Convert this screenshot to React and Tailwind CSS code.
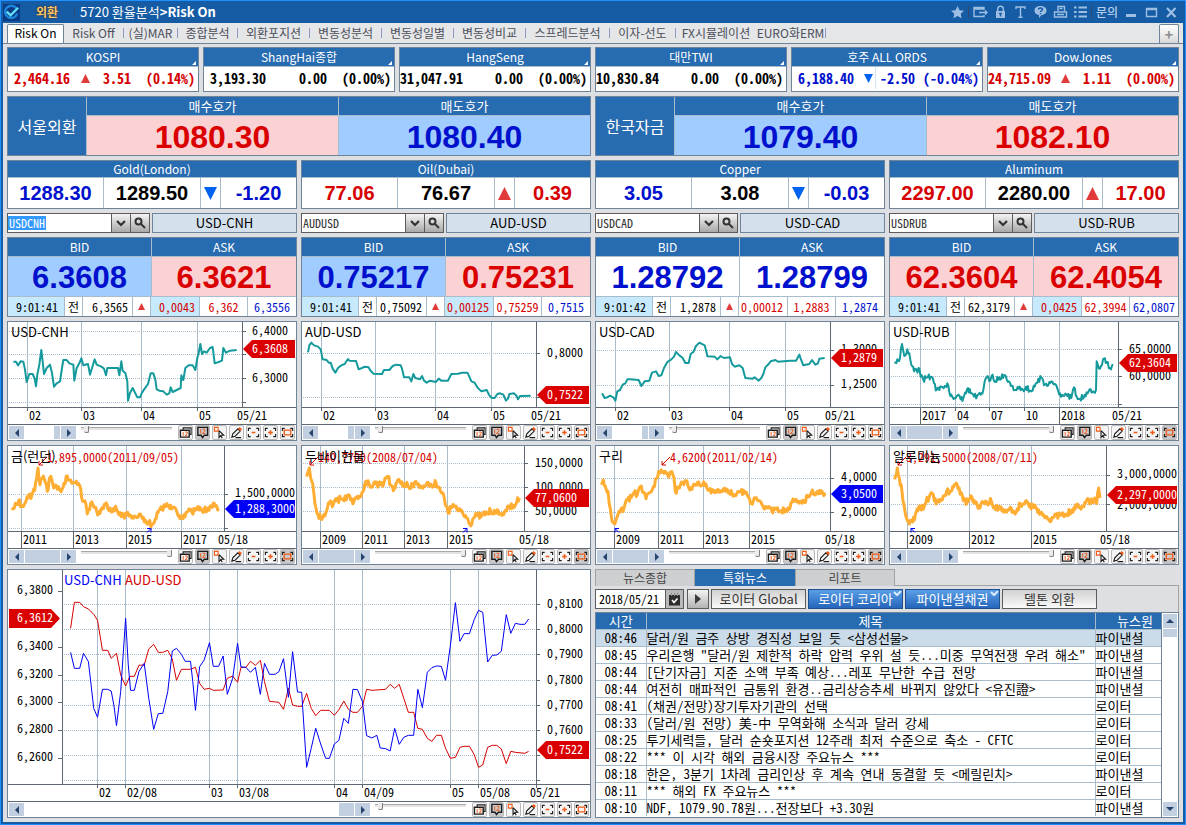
import React from 'react';
import clsx from 'clsx';

const indices = [
  { name: 'KOSPI', value: '2,464.16', dir: 'up', change: '3.51', pct: '(0.14%)' },
  { name: 'ShangHai종합', value: '3,193.30', dir: '', change: '0.00', pct: '(0.00%)' },
  { name: 'HangSeng', value: '31,047.91', dir: '', change: '0.00', pct: '(0.00%)' },
  { name: '대만TWI', value: '10,830.84', dir: '', change: '0.00', pct: '(0.00%)' },
  { name: '호주 ALL ORDS', value: '6,188.40', dir: 'down', change: '-2.50', pct: '(-0.04%)' },
  { name: 'DowJones', value: '24,715.09', dir: 'up', change: '1.11', pct: '(0.00%)' },
];

const spots = [
  { name: '서울외환', quotes: [['매수호가', '1080.30', 'up'], ['매도호가', '1080.40', 'down']] },
  { name: '한국자금', quotes: [['매수호가', '1079.40', 'down'], ['매도호가', '1082.10', 'up']] },
];

const commodities = [
  { name: 'Gold(London)', now: '1288.30', prev: '1289.50', dir: 'down', change: '-1.20', tone: 'down' },
  { name: 'Oil(Dubai)', now: '77.06', prev: '76.67', dir: 'up', change: '0.39', tone: 'up' },
  { name: 'Copper', now: '3.05', prev: '3.08', dir: 'down', change: '-0.03', tone: 'down' },
  { name: 'Aluminum', now: '2297.00', prev: '2280.00', dir: 'up', change: '17.00', tone: 'up' },
];

const pairs = [
  { code: 'USDCNH', name: 'USD-CNH', bid: '6.3608', ask: '6.3621', bidTone: 'down', askTone: 'up', time: '9:01:41', last: '6,3565', change: '0,0043', high: '6,362', low: '6,3556', flash: true, selected: true },
  { code: 'AUDUSD', name: 'AUD-USD', bid: '0.75217', ask: '0.75231', bidTone: 'down', askTone: 'up', time: '9:01:41', last: '0,75092', change: '0,00125', high: '0,75259', low: '0,7515', flash: true },
  { code: 'USDCAD', name: 'USD-CAD', bid: '1.28792', ask: '1.28799', bidTone: 'flat', askTone: 'flat', time: '9:01:42', last: '1,2878', change: '0,00012', high: '1,2883', low: '1,2874', flash: false },
  { code: 'USDRUB', name: 'USD-RUB', bid: '62.3604', ask: '62.4054', bidTone: 'up', askTone: 'up', time: '9:01:41', last: '62,3179', change: '0,0425', high: '62,3994', low: '62,0807', flash: true },
];

const tabs = [
  ['Risk Off', 'w-[60px]'],
  ['(실)MAR', 'w-[54px]'],
  ['종합분석', 'w-[60px]'],
  ['외환포지션', 'w-[72px]'],
  ['변동성분석', 'w-[72px]'],
  ['변동성일별', 'w-[72px]'],
  ['변동성비교', 'w-[72px]'],
  ['스프레드분석', 'w-[84px]'],
  ['이자-선도', 'w-[66px]'],
  ['FX시뮬레이션', 'w-[80px]'],
  ['EURO화ERM', 'w-[70px]'],
];

const news = [
  ['08:46', '달러/원 금주 상방 경직성 보일 듯 <삼성선물>', '파이낸셜'],
  ['08:45', '우리은행 "달러/원 제한적 하락 압력 우위 설 듯...미중 무역전쟁 우려 해소"', '파이낸셜'],
  ['08:44', '[단기자금] 지준 소액 부족 예상...레포 무난한 수급 전망', '파이낸셜'],
  ['08:44', '여전히 매파적인 금통위 환경..금리상승추세 바뀌지 않았다 <유진證>', '파이낸셜'],
  ['08:41', '(채권/전망)장기투자기관의 선택', '로이터'],
  ['08:33', '(달러/원 전망) 美-中 무역화해 소식과 달러 강세', '로이터'],
  ['08:25', '투기세력들, 달러 순숏포지션 12주래 최저 수준으로 축소 - CFTC', '로이터'],
  ['08:22', '*** 이 시각 해외 금융시장 주요뉴스 ***', '로이터'],
  ['08:18', '한은, 3분기 1차례 금리인상 후 계속 연내 동결할 듯 <메릴린치>', '파이낸셜'],
  ['08:11', '*** 해외 FX 주요뉴스 ***', '로이터'],
  ['08:10', 'NDF, 1079.90.78원...전장보다 +3.30원', '파이낸셜'],
];

// Series points are sampled three times finer than the plot; origin is the plot's top left corner.
const charts = [
  {
    title: 'USD-CNH', origin: [24, 12], color: '#149a9c', width: 2, rough: 0, full: false,
    axis: 234, grid: [[19, '02'], [73, '03'], [133, '04'], [189, '05']], end: [229, '05/21'],
    rows: [9, 32, 56, 80], labels: [[9, '6,4000'], [56, '6,3000']], tag: [27, '6,3608', '#db0000'], labelX: 244,
    points: '40,131 48,131 54,142 62,130 70,131 75,155 80,192 88,168 98,168 104,182 108,205 112,170 118,140 124,96 128,130 132,168 140,150 150,140 156,165 162,206 170,196 180,190 186,150 190,126 200,126 208,136 220,140 223,188 230,150 238,136 244,121 250,142 264,138 270,170 276,150 284,124 290,140 304,146 312,152 318,172 322,150 340,150 354,150 358,172 364,130 368,158 376,165 382,190 384,248 390,225 398,210 404,222 412,238 420,238 426,224 434,212 444,198 452,166 460,166 466,185 470,214 478,218 490,220 500,230 508,226 512,208 518,222 530,216 542,210 544,172 550,186 556,150 566,142 578,142 586,156 592,120 596,105 601,78 606,108 612,100 620,104 630,90 638,87 644,136 656,132 666,128 670,90 678,104 690,98 710,96',
  },
  {
    title: 'AUD-USD', origin: [18, 12], color: '#149a9c', width: 2, rough: 0, full: false,
    axis: 234, grid: [[19, '02'], [73, '03'], [133, '04'], [189, '05']], end: [229, '05/21'],
    rows: [31, 75], labels: [[31, '0,8000']], tag: [73, '0,7522', '#db0000'], labelX: 245,
    points: '36,103 40,82 46,74 54,82 66,86 74,94 80,124 92,126 98,134 104,134 110,152 118,164 126,150 136,142 146,138 156,123 160,128 180,129 188,154 198,150 206,146 218,148 222,156 232,167 258,168 264,156 280,156 290,144 300,140 314,142 318,152 324,178 340,178 346,190 352,168 358,180 372,184 378,174 384,188 392,194 402,188 420,192 428,182 436,188 456,188 466,168 486,167 498,164 514,164 520,176 526,190 536,194 544,208 556,220 572,216 580,232 588,240 596,240 604,228 612,226 622,230 630,248 636,242 640,228 654,226 662,234 666,244 672,234 704,233',
  },
  {
    title: 'USD-CAD', origin: [18, 12], color: '#149a9c', width: 2, rough: 0, full: false,
    axis: 234, grid: [[19, '02'], [73, '03'], [133, '04'], [189, '05']], end: [229, '05/21'],
    rows: [28, 63], labels: [[27, '1,3000'], [62, '1,2500']], tag: [36, '1,2879', '#db0000'], labelX: 245,
    points: '36,226 44,240 52,238 60,233 70,238 76,248 82,220 90,216 98,200 106,196 112,184 120,184 146,186 154,204 164,190 178,188 186,164 198,160 206,174 214,172 222,150 232,132 244,124 252,116 258,102 266,110 278,120 286,135 296,135 302,108 310,102 318,84 328,74 344,82 350,104 352,115 374,116 382,124 392,114 402,120 420,118 426,138 434,146 448,142 458,150 466,180 488,182 494,178 506,188 514,180 520,168 526,148 536,138 542,130 556,126 564,131 600,128 618,128 628,110 632,122 640,142 658,138 666,126 676,140 684,136 688,122 704,120',
  },
  {
    title: 'USD-RUB', origin: [12, 12], color: '#149a9c', width: 2, rough: 8, full: true,
    axis: 228, grid: [[30, '2017', true], [65, '04'], [99, '07'], [134, '10'], [169, '2018', true]], end: [222, '05/21'],
    rows: [27, 54, 82], labels: [[27, '65,0000'], [54, '60,0000']], tag: [41, '62,3604', '#db0000'], labelX: 239,
    points: '26,136 34,124 42,120 48,78 52,100 58,112 64,94 70,106 76,140 84,160 92,158 100,152 104,176 112,186 120,180 134,176 144,196 152,216 160,216 168,206 176,204 184,196 190,222 196,230 206,240 214,234 224,244 232,240 240,226 246,210 254,226 264,236 274,232 284,230 292,216 296,190 302,178 310,190 320,170 328,190 340,178 354,172 362,184 372,194 380,204 386,216 398,212 410,214 420,206 434,218 446,206 454,194 466,178 474,202 490,192 506,198 514,212 522,226 532,234 544,234 556,240 564,208 572,236 582,242 596,230 608,220 620,222 630,216 632,130 642,152 654,122 662,132 672,150 680,138',
  },
  {
    title: '금(런던)', origin: [24, 384], color: '#ffad33', width: 3, rough: 9, full: true,
    axis: 216, grid: [[13, '2011', true], [65, '2013', true], [118, '2015', true], [173, '2017', true]], end: [210, '05/18'],
    rows: [48, 82], labels: [[47, '1,500,0000']], tag: [63, '1,288,3000', '#0000f5'], labelX: 227,
    note: [39, '1,895,0000(2011/09/05)'], high: 30, low: [143, 'right'],
    points: '36,576 46,556 56,548 64,562 76,554 84,540 96,530 104,518 110,480 114,450 120,500 130,474 136,494 142,520 150,478 158,496 164,506 172,514 186,514 192,496 202,474 212,486 222,494 232,500 242,512 248,550 258,560 262,588 272,556 282,568 290,580 300,586 308,568 316,558 324,574 340,572 350,574 360,584 370,596 380,588 392,592 404,594 414,598 424,594 436,606 446,612 456,620 466,602 474,584 486,572 498,566 512,562 522,568 532,586 540,602 552,590 564,580 576,584 588,576 600,568 612,576 624,570 634,564 648,562 656,572',
  },
  {
    title: '두바이현물', origin: [18, 384], color: '#ffad33', width: 3, rough: 9, full: true,
    axis: 222, grid: [[18, '2009', true], [60, '2011', true], [102, '2013', true], [145, '2015', true]], end: [217, '05/18'],
    rows: [17, 41, 65], labels: [[17, '150,0000'], [41, '100,0000'], [65, '50,0000']], tag: [52, '77,0600', '#db0000'], labelX: 233,
    note: [16, '140,7700(2008/07/04)'], high: 7, low: [165, 'right'],
    points: '32,476 36,462 40,450 44,480 50,496 54,530 60,570 66,590 74,598 84,590 92,578 100,556 112,558 122,548 134,542 144,548 154,532 164,546 174,550 186,542 198,524 206,500 216,488 226,506 240,498 254,500 264,494 276,476 284,500 292,518 300,496 312,492 326,498 336,504 350,502 362,494 374,504 390,502 406,500 420,494 430,508 440,524 448,560 456,584 466,570 480,564 490,572 502,590 512,600 522,620 530,604 542,592 556,596 570,582 584,578 598,580 612,588 626,580 640,566 652,562 662,552 670,540',
  },
  {
    title: '구리', origin: [18, 384], color: '#ffad33', width: 3, rough: 8, full: true,
    axis: 234, grid: [[18, '2009', true], [62, '2011', true], [107, '2013', true], [153, '2015', true]], end: [229, '05/18'],
    rows: [32, 66], labels: [[31, '4,0000'], [66, '2,0000']], tag: [48, '3,0500', '#0000f5'], labelX: 245,
    note: [74, '4,6200(2011/02/14)'], high: 65, low: [18, 'left'],
    points: '34,500 40,486 46,504 54,520 58,560 64,596 72,616 80,600 90,582 102,570 112,546 124,538 132,524 142,530 154,504 160,524 168,542 178,524 190,506 200,480 206,460 214,456 222,466 234,474 242,462 252,480 256,520 268,510 278,494 288,488 296,508 306,514 316,502 326,492 338,500 348,498 358,516 372,522 384,514 398,520 412,514 426,526 440,528 452,522 466,526 476,538 484,554 496,540 506,548 516,560 530,568 546,580 560,574 574,578 586,574 600,570 606,552 618,544 630,550 644,554 652,532 664,524 680,522 692,526 708,528',
  },
  {
    title: '알루미늄', origin: [12, 384], color: '#ffad33', width: 3, rough: 9, full: true,
    axis: 216, grid: [[17, '2009', true], [79, '2012', true], [141, '2015', true]], end: [210, '05/18'],
    rows: [29, 58], labels: [[28, '3,000,0000'], [59, '2,000,0000']], tag: [49, '2,297,0000', '#db0000'], labelX: 227,
    note: [16, '3,291,5000(2008/07/11)'], high: 7, low: [20, 'left'],
    points: '26,484 34,450 40,480 48,520 54,560 62,600 70,618 80,612 88,590 96,578 102,564 112,574 120,552 130,536 142,530 150,558 160,552 172,534 182,518 192,520 200,506 208,500 216,512 226,524 232,548 246,552 258,538 268,556 282,570 292,554 302,552 316,550 326,566 342,572 356,576 370,574 384,582 394,572 404,558 418,550 430,566 444,568 458,576 470,592 486,604 504,598 524,592 540,588 558,576 572,566 588,566 602,546 614,552 626,540 632,556 638,510 642,540',
  },
];

const cnhLine = '186,262 196,310 210,310 220,265 233,290 240,360 247,430 257,457 270,373 284,373 293,378 300,420 307,482 318,380 331,160 338,300 344,376 354,376 366,320 380,295 392,400 405,493 417,446 429,445 442,380 454,258 465,250 478,268 488,289 502,289 508,350 515,436 526,305 538,285 552,233 562,304 576,304 588,273 599,388 613,340 626,235 635,306 648,307 660,322 673,307 686,388 697,295 710,328 725,328 735,320 747,281 760,397 771,260 784,381 795,382 808,607 820,550 832,490 845,537 858,580 868,580 881,537 893,526 906,460 918,475 930,373 942,374 955,410 966,512 980,519 993,511 1002,549 1016,551 1028,558 1040,490 1052,538 1064,517 1076,511 1090,511 1101,373 1113,428 1126,322 1138,308 1150,303 1163,304 1174,346 1187,240 1200,113 1212,229 1223,206 1237,206 1250,163 1261,136 1272,142 1285,291 1297,271 1309,270 1321,259 1334,149 1346,205 1358,175 1370,178 1383,178 1393,162';
const audLine = '186,190 196,112 210,112 220,125 233,132 247,148 257,166 270,256 284,256 293,280 307,265 318,330 331,363 342,334 354,334 366,301 380,300 392,252 405,238 417,262 429,262 442,256 454,282 465,346 478,313 502,313 515,307 526,355 538,373 552,370 562,376 588,375 599,340 613,333 626,352 635,307 648,307 660,289 673,301 686,286 697,350 710,409 735,412 747,433 760,370 771,420 784,424 795,424 808,385 820,430 832,452 845,436 868,436 881,451 893,434 906,408 918,433 930,442 942,442 955,424 966,373 980,376 1016,373 1028,358 1040,370 1052,358 1064,400 1076,442 1090,442 1101,490 1113,493 1126,520 1138,529 1150,511 1163,511 1174,550 1187,580 1200,577 1212,547 1223,544 1237,544 1250,570 1261,607 1272,600 1285,547 1297,541 1309,541 1321,552 1334,596 1346,559 1358,562 1383,565 1393,559';

const bigTone = {
  up: 'bg-[#fad2d3] text-[#db0000]',
  down: 'bg-[#a1ccff] text-[#0010cd]',
  flat: 'bg-white text-[#0010cd]',
};

const textTone = {
  up: 'text-[#d60000]',
  down: 'text-[#0010cd]',
};

function roughen(points, amount) {
  if (!amount) return points;
  const list = points.split(' ').map((p) => p.split(',').map(Number));
  const out = [];
  let n = 0;
  list.forEach(([x, y], i) => {
    out.push([x, y]);
    const next = list[i + 1];
    if (!next) return;
    const steps = Math.max(1, Math.round((next[0] - x) / 3));
    for (let s = 1; s < steps; s++) {
      n += 1;
      const swing = Math.sin(n * 2.3 + n * n * 0.71) * amount;
      out.push([x + ((next[0] - x) * s) / steps, y + ((next[1] - y) * s) / steps + swing]);
    }
  });
  return out.map((p) => p.map((v) => v.toFixed(1)).join(',')).join(' ');
}

const Triangle = ({ dir, size = 9 }) => (
  <svg width={size} height={size} viewBox="0 0 10 10" aria-hidden="true">
    {dir === 'up' ? <path d="M5 0 10 10H0Z" fill="#e03a3a" /> : <path d="M0 0h10L5 10Z" fill="#0062f0" />}
  </svg>
);

const Card = ({ className, children }) => (
  <section className={clsx('overflow-hidden border border-[#6f8499] bg-white', className)}>{children}</section>
);

const CardHead = ({ className, children }) => (
  <h2 className={clsx('border-b border-[#a9bccb] bg-[#276bb0] pb-px text-center text-xs leading-[17px] whitespace-nowrap text-white', className)}>
    {children}
  </h2>
);

const TitleIcon = ({ label, children }) => (
  <button type="button" aria-label={label} className="flex w-5 justify-center">
    <svg width="15" height="14" viewBox="0 0 15 14" fill="none" stroke="#9dbfe4" strokeWidth="1.4">{children}</svg>
  </button>
);

const TitleBar = () => (
  <header className="flex h-[22px] items-center bg-[#155ca5] pl-[2px] pr-1 text-white">
    <svg width="17" height="17" viewBox="0 0 18 18" aria-hidden="true">
      <rect width="18" height="18" fill="#0b3b84" />
      <path d="M14 4.500A6.500 6.500 0 1 0 15 10" fill="none" stroke="#1c86dc" strokeWidth="2.500" />
      <path d="M4 8l4 4 8-8" fill="none" stroke="#5fe0f5" strokeWidth="2.500" />
    </svg>
    <strong className="ml-4 text-xs leading-4 text-[#ffc66b] [text-shadow:0_0_2px_#3a2300]">외환</strong>
    <span className="mr-[5px] ml-4 h-3 w-px bg-[#2f4a70]" />
    <h1 className="flex text-[13px] leading-4">
      5720 환율분석<b>&gt;Risk On</b>
    </h1>
    <div className="ml-auto flex items-center">
      <TitleIcon label="즐겨찾기">
        <path d="M7.500 1l2 4.200 4.500.5-3.300 3 .9 4.500-4.100-2.300-4.100 2.300.9-4.500-3.300-3 4.500-.5Z" fill="#9dbfe4" stroke="none" />
      </TitleIcon>
      <span className="mx-px h-3 w-px bg-[#2f4a70]" />
      <TitleIcon label="내보내기">
        <path d="M11 5V2.500H1v9h10V10M6 7.500h8M12 5.500l2 2-2 2M1 4h10" />
      </TitleIcon>
      <TitleIcon label="잠금">
        <path d="M4.700 6V4a2.800 2.800 0 0 1 5.600 0v2" />
        <path d="M3 6h9v7H3Z" fill="#9dbfe4" stroke="none" />
        <path d="M7.500 8v3.500M6 8.500h3" stroke="#155ca5" />
      </TitleIcon>
      <TitleIcon label="글꼴">
        <path d="M3 4V2h9v2M7.500 2v10M5.500 12.300h4" />
      </TitleIcon>
      <TitleIcon label="도움말">
        <path d="M7.500 1c3.300 0 6 1.700 6 4.500S11 10 8.500 10L6 13v-3C3 9.600 1.500 8 1.500 5.500 1.500 2.700 4.200 1 7.500 1Z" fill="#9dbfe4" stroke="none" />
        <path d="M5.500 4.500c0-2 4-2 4 0 0 1.200-2 1-2 2.500M7.500 8v1.200" stroke="#155ca5" />
      </TitleIcon>
      <TitleIcon label="인쇄">
        <path d="M5 6V1.500h6.500V6M1.500 7h12v5h-12ZM4 9.500h7M6.500 3.500h3" />
      </TitleIcon>
      <TitleIcon label="목록">
        <path d="M1 2.500h2.500M1 7h2.500M1 11.500h2.500M5.500 2.500H14M5.500 7H14M5.500 11.500H14" strokeWidth="2" />
      </TitleIcon>
      <span className="mx-px h-3 w-px bg-[#2f4a70]" />
      <button type="button" className="w-7 text-xs leading-4 font-medium text-[#b4cfec]">문의</button>
      <TitleIcon label="최소화">
        <path d="M2 10.500h10" strokeWidth="3" />
      </TitleIcon>
      <TitleIcon label="최대화">
        <path d="M2.500 3.500h10v8h-10ZM2.500 4.500h10" />
      </TitleIcon>
      <TitleIcon label="닫기">
        <path d="M3 3l8.500 9M11.500 3 3 12" strokeWidth="2.200" />
      </TitleIcon>
    </div>
  </header>
);

const TabBar = () => (
  <nav className="flex h-[21px] items-end border-b border-[#6f8499] bg-[#e5e6e8] px-1 text-xs">
    <button type="button" className="h-[19px] w-[57px] shrink-0 rounded-t-xs border border-b-0 border-[#6f8499] bg-white pb-[3px] leading-[15px]">
      Risk On
    </button>
    {tabs.map(([name, width], i) => (
      <button
        key={name}
        type="button"
        className={clsx('my-[5px] flex h-2.5 shrink-0 items-center justify-center whitespace-nowrap border-[#8a9cc0] text-[#4c4f5a]', i !== 9 && 'border-r', width)}
      >
        {name}
      </button>
    ))}
    <button type="button" aria-label="탭 추가" className="ml-auto flex h-[19px] w-5 items-center justify-center rounded-t-xs border border-b-0 border-[#6f8499] bg-gradient-to-b from-white to-[#d8d8d8] text-sm leading-3 font-bold text-[#8a8a8a]">
      +
    </button>
  </nav>
);

const IndexCard = ({ item }) => (
  <Card>
    <div className="relative">
      <CardHead>{item.name}</CardHead>
      <span className="absolute right-0.5 bottom-0.5 border-b-4 border-l-4 border-b-white border-l-transparent" />
    </div>
    <div className={clsx("flex items-center pb-[2px] whitespace-nowrap text-sm leading-[22px] font-bold [font-family:'Noto_Sans_Mono_CJK_KR','Liberation_Mono',monospace]", textTone[item.dir] || 'text-black')}>
      <span className="w-[63px] pr-px text-right">{item.value}</span>
      <span className={clsx('flex h-[22px] w-[21px] items-center justify-end pr-0.5', item.dir === 'down' && 'border-r border-[#cfe6f3]')}>
        {item.dir && <Triangle dir={item.dir} />}
      </span>
      <span className="flex-1 text-right">{item.change}</span>
      <span className="w-[67px] pr-[3px] text-right">{item.pct}</span>
    </div>
  </Card>
);

const SpotCard = ({ item }) => (
  <Card className="flex">
    <h2 className="flex w-[79px] items-center justify-center border-r border-[#a9bccb] bg-[#276bb0] text-base text-white">{item.name}</h2>
    {item.quotes.map(([label, value, tone], i) => (
      <div key={label} className={clsx('flex-1', i === 0 && 'border-r border-[#a9bccb]')}>
        <h3 className="border-b border-[#a9bccb] bg-[#276bb0] pb-px text-center text-[13px] leading-[17px] text-white">{label}</h3>
        <p className={clsx("pt-[3px] text-center text-[32px] leading-9 font-bold [font-family:'Liberation_Sans',sans-serif]", bigTone[tone])}>{value}</p>
      </div>
    ))}
  </Card>
);

const CommodityCard = ({ item }) => (
  <Card>
    <h2 className="border-b border-[#a9bccb] bg-[#276bb0] text-center text-xs leading-4 text-white">{item.name}</h2>
    <div className="grid grid-cols-[96fr_97fr_20fr_75fr] divide-x divide-[#a9bccb] text-center text-xl leading-[30px] font-bold [font-family:'Liberation_Sans',sans-serif]">
      <span className={textTone[item.tone]}>{item.now}</span>
      <span className="text-black">{item.prev}</span>
      <span className="flex items-center justify-center"><Triangle dir={item.dir} size={13} /></span>
      <span className={textTone[item.tone]}>{item.change}</span>
    </div>
  </Card>
);

const PairPicker = ({ pair }) => (
  <div className="flex gap-[2px]">
    <div className="flex h-5 w-[143px] shrink-0 border border-[#5c5c5c] bg-white">
      <input
        aria-label={`${pair.name} 코드`}
        defaultValue={pair.code}
        className={clsx(
          "min-w-0 pl-px text-xs [font-family:'Noto_Sans_Mono_CJK_KR','Liberation_Mono',monospace]",
          pair.selected ? 'my-[2px] w-[38px] bg-[#3399ff] leading-[14px] text-white' : 'flex-1 leading-[18px] text-[#333]'
        )}
      />
      <button type="button" aria-label="코드 목록" className="ml-auto flex w-[19px] items-center justify-center border-l border-[#5c5c5c] bg-gradient-to-b from-[#f4f4f4] to-[#a9a9a9]">
        <svg width="10" height="7" viewBox="0 0 10 7" fill="none" stroke="#333" strokeWidth="2.200"><path d="M1 1l4 4 4-4" /></svg>
      </button>
      <button type="button" aria-label="코드 검색" className="flex w-[19px] items-center justify-center border-l border-[#5c5c5c] bg-gradient-to-b from-[#f4f4f4] to-[#a9a9a9]">
        <svg width="12" height="12" viewBox="0 0 12 12" fill="none" stroke="#333" strokeWidth="2"><circle cx="4.500" cy="4.500" r="3" /><path d="M7 7l4 4" /></svg>
      </button>
    </div>
    <div className="h-5 flex-1 border border-[#6f8499] bg-[#d5e0ed] text-center text-[13px] leading-[17px]">{pair.name}</div>
  </div>
);

const PairCard = ({ pair }) => (
  <Card>
    <div className="grid grid-cols-2 divide-x divide-[#a9bccb] text-center">
      {[['BID', pair.bid, pair.bidTone], ['ASK', pair.ask, pair.askTone]].map(([label, value, tone]) => (
        <div key={label}>
          <CardHead>{label}</CardHead>
          <p className={clsx("pt-[3px] text-[31px] leading-9 font-bold [font-family:'Liberation_Sans',sans-serif]", bigTone[tone])}>{value}</p>
        </div>
      ))}
    </div>
    <div className="grid grid-cols-[57fr_18fr_50fr_18fr_49fr_48fr_48fr] divide-x divide-[#a9bccb] border-t border-[#a9bccb] text-xs leading-[19px] whitespace-nowrap [font-family:'Noto_Sans_Mono_CJK_KR','Liberation_Mono',monospace] *:min-w-0 *:overflow-hidden">
      <span className="bg-[#c6e9fc] pr-1.5 text-right">{pair.time}</span>
      <span className="text-center">전</span>
      <span className="pr-1 text-right">{pair.last}</span>
      <span className="flex items-center justify-center"><Triangle dir="up" size={7} /></span>
      <span className={clsx('pr-1 text-right text-[#d60000]', pair.flash && 'bg-[#c6e9fc]')}>{pair.change}</span>
      <span className="text-center text-[#d60000]">{pair.high}</span>
      <span className="text-center text-[#0010cd]">{pair.low}</span>
    </div>
  </Card>
);

const corners = 'M4 2.500H1.500v3M1.500 8.500v3H4M10 2.500h2.500v3M12.500 8.500v3H10';

const tools = [
  ['창 복제', <><path d="M4.500 4V2h8.500v7H11" /><path d="M1.500 4.500h9.500v7.500H1.500Z" strokeWidth="1.500" /><path d="M4.500 6.500v4M6.500 6.500h2.300v1.800l-2.300 2.200h2.500" stroke="#f05a14" strokeWidth="1" /></>],
  ['수치 표시', <><path d="M2 1.500h10.500v8.500H9L7 12.500 5.500 10H2Z" strokeWidth="1.500" /><path d="M5 3.500v4.500M7 3.500h2.500v2L7 8h3" stroke="#f05a14" strokeWidth="1" /></>],
  ['선택', <><path d="M1.500 1.500h4v4h-4Z" stroke="#f05a14" /><path d="M6.500 5v7.500l1.800-2 1.700 2.500M6.500 5l5 5H8.500" /></>],
  ['그리기', <><path d="M2 12l1-3.500L8.500 3 11 5.500 5.500 11ZM6 12.500h6" /><path d="M9.500 2l2.500 2.500" stroke="#f05a14" strokeWidth="2.500" /></>],
  ['축소', <><path d={corners} /><path d="M5 7h4" stroke="#f05a14" strokeWidth="1.600" /></>],
  ['확대', <><path d={corners} /><path d="M4.500 7h5M7 4.500v5" stroke="#f05a14" strokeWidth="1.600" /></>],
  ['전체 보기', <><path d={corners} /><path d="M3.500 4.500h7v5h-7Z" stroke="#f05a14" strokeWidth="1.400" /></>],
];

const ChartTools = ({ full, wide }) => (
  <div className="box-content flex h-[15px] items-center border-t border-[#5f6770] bg-white px-px">
    <div className={clsx('flex h-[13px] gap-px', wide ? 'w-[361px]' : 'w-[67px]')}>
      <button type="button" aria-label="이전" className="flex w-[15px] items-center justify-center bg-[#c1cfe1]">
        <svg width="4" height="8" viewBox="0 0 4 8"><path d="M4 0v8L0 4Z" fill="#26456e" /></svg>
      </button>
      <span className={clsx('ml-auto bg-[#c1cfe1]', full ? 'w-[35px]' : wide ? 'w-[15px]' : 'w-1.5')} />
      <button type="button" aria-label="다음" className="flex w-[15px] items-center justify-center bg-[#c1cfe1]">
        <svg width="4" height="8" viewBox="0 0 4 8"><path d="M0 0v8l4-4Z" fill="#26456e" /></svg>
      </button>
    </div>
    <input
      type="range"
      aria-label="표시 기간"
      defaultValue={full ? 100 : 4}
      className="ml-[5px] h-2 w-[91px] appearance-none self-start bg-[linear-gradient(#fff_2px,#a8a8a8_2px,#a8a8a8_3px,#e4e4e4_3px,#e4e4e4_5px,#fff_5px)] [&::-webkit-slider-thumb]:h-[7px] [&::-webkit-slider-thumb]:w-[5px] [&::-webkit-slider-thumb]:appearance-none [&::-webkit-slider-thumb]:rounded-b-xs [&::-webkit-slider-thumb]:border-r [&::-webkit-slider-thumb]:border-b [&::-webkit-slider-thumb]:border-[#7d7d7d] [&::-webkit-slider-thumb]:bg-[#ececec]"
    />
    <div className="ml-auto flex gap-[2px]">
      {tools.map(([label, icon], i) => (
        <button
          key={label}
          type="button"
          aria-label={label}
          className={clsx('flex h-[15px] w-[15px] items-center justify-center rounded-xs border border-[#b9b9b9]', i === 1 || (i === 6 && full) ? 'bg-[#c9c9cb]' : 'bg-[#f4f4f4]')}
        >
          <svg width="13" height="13" viewBox="0 0 14 14" fill="none" stroke="#1c1c1c" strokeWidth="1.200" className="shrink-0">{icon}</svg>
        </button>
      ))}
    </div>
  </div>
);

const monoText = "[font-family:'Noto_Sans_Mono_CJK_KR','Liberation_Mono',monospace]";

const Chart = ({ chart }) => {
  const { axis, origin, tag, labelX } = chart;
  const [tagY, tagText, tagColor] = tag;
  return (
    <Card>
      <svg viewBox="0 0 288 102" className={clsx('block w-full text-xs', monoText)} role="img" aria-label={chart.title}>
        {chart.rows.map((y) => (
          <React.Fragment key={y}>
            <path d={`M1 ${y + 0.5}H${axis}`} stroke="#a9bccb" strokeDasharray="1 1" />
            <path d={`M${axis} ${y + 0.5}h4`} stroke="#5f6770" />
          </React.Fragment>
        ))}
        {chart.grid.map(([x, label, year]) => (
          <React.Fragment key={label}>
            <path d={`M${x + 0.5} 0V85`} stroke="#a9bccb" />
            <path d={`M${x + 0.5} 85v${year ? 17 : 4}`} stroke="#5f6770" />
            <text x={x + 2} y="98">{label}</text>
          </React.Fragment>
        ))}
        <path d={`M0 85.500H288M${axis + 0.5} 0V85`} stroke="#5f6770" />
        <text x={chart.end[0]} y="98">{chart.end[1]}</text>
        {chart.labels.map(([y, label]) => (
          <text key={label} x={labelX} y={y + 4}>{label}</text>
        ))}
        {chart.note && (
          <>
            <text x={chart.note[0]} y="16" fill="#d60000">{chart.note[1]}</text>
            <path d={`M${chart.high + 9} 11l-8 8m0-4v4h4`} fill="none" stroke="#d60000" />
            <path
              d={chart.low[1] === 'right' ? `M${chart.low[0] - 4} 82.500h4v4m0-4l-4 4` : `M${chart.low[0] + 5} 82.500h-4v4m0-4l4 4`}
              fill="none"
              stroke="#0000f5"
            />
          </>
        )}
        <polyline
          points={roughen(chart.points, chart.rough)}
          transform={`scale(${1 / 3}) translate(${-origin[0]} ${-origin[1]})`}
          fill="none"
          stroke={chart.color}
          strokeWidth={chart.width * 3}
          strokeLinejoin="round"
        />
        <path d={`M${axis + 1} ${tagY}l9-9H287v18H${axis + 10}Z`} fill={tagColor} />
        <text x={labelX} y={tagY + 4} fill="#fff">{tagText}</text>
        <text x="3" y="15" className="text-[13px] [font-family:'Noto_Sans_CJK_KR','Liberation_Sans',sans-serif]">{chart.title}</text>
      </svg>
      <ChartTools full={chart.full} />
    </Card>
  );
};

const compareDates = [[89, '02'], [117, '02/08'], [201, '03'], [229, '03/08'], [326, '04'], [354, '04/09'], [442, '05'], [470, '05/08']];
const compareLeft = [[20, '6,3800'], [76, '6,3400'], [104, '6,3200'], [131, '6,3000'], [159, '6,2800'], [187, '6,2600']];
const compareRight = [[34, '0,8100'], [59, '0,8000'], [84, '0,7900'], [110, '0,7800'], [135, '0,7700'], [160, '0,7600'], [185, ''], [210, '']];

const CompareChart = () => (
  <Card>
    <svg viewBox="0 0 582 231" className={clsx('block w-full text-xs', monoText)} role="img" aria-label="USD-CNH, AUD-USD">
      {compareRight.map(([y, label]) => (
        <React.Fragment key={y}>
          <path d={`M54 ${y + 0.5}H528`} stroke="#a9bccb" strokeDasharray="1 1" />
          <path d={`M528 ${y + 0.5}h4`} stroke="#5f6770" />
          {label && <text x="539" y={y + 4}>{label}</text>}
        </React.Fragment>
      ))}
      {compareLeft.map(([y, label]) => (
        <React.Fragment key={y}>
          <path d={`M50 ${y + 1.5}h4`} stroke="#5f6770" />
          <text x="9" y={y + 4}>{label}</text>
        </React.Fragment>
      ))}
      {compareDates.map(([x, label]) => (
        <React.Fragment key={label}>
          <path d={`M${x + 0.5} 0V214`} stroke="#a9bccb" />
          <path d={`M${x + 0.5} 214v4`} stroke="#5f6770" />
          <text x={x + 2} y="227">{label}</text>
        </React.Fragment>
      ))}
      <path d="M0 214.500H582M54.500 0V214M528.500 0V218" stroke="#5f6770" fill="none" />
      <text x="522" y="227">05/21</text>
      <g transform="translate(-8 -5) scale(0.3795 0.3333)" fill="none">
        <polyline points={audLine} stroke="#d60000" vectorEffect="non-scaling-stroke" />
        <polyline points={cnhLine} stroke="#0000f5" vectorEffect="non-scaling-stroke" />
      </g>
      <path d="M1 39h42l9 9.500-9 9.500H1Z" fill="#db0000" />
      <text x="9" y="52" fill="#fff">6,3612</text>
      <path d="M529 180l9-9h43v18h-43Z" fill="#db0000" />
      <text x="539" y="184" fill="#fff">0,7522</text>
      <g className="text-[13px] [font-family:'Noto_Sans_CJK_KR','Liberation_Sans',sans-serif]">
        <text x="56" y="15" fill="#0000f5">USD-CNH</text>
        <text x="117" y="15" fill="#d60000">AUD-USD</text>
      </g>
    </svg>
    <ChartTools wide />
  </Card>
);

const sources = [['로이터 Global', false], ['로이터 코리아', true], ['파이낸셜채권', true], ['델톤 외환', false]];

const NewsPanel = () => (
  <section className="flex flex-col">
    <div className="flex h-[17px] text-xs leading-[14px] text-[#444]">
      {['뉴스종합', '특화뉴스', '리포트'].map((name, i) => (
        <button
          key={name}
          type="button"
          className={clsx('w-[100px]', i === 1 ? 'bg-[#276bb0] text-white' : 'border border-b-0 border-[#a0a4a0] bg-[#cecfd0]')}
        >
          {name}
        </button>
      ))}
      <span className="flex-1 border-b border-[#a0a4a0]" />
    </div>
    <div className="flex h-[26px] items-center gap-[2px] border-r border-[#a0a4a0]">
      <div className="mr-px flex h-5 w-[89px] border border-[#5c5c5c] bg-white">
        <input aria-label="날짜" defaultValue="2018/05/21" className={clsx('min-w-0 flex-1 pl-[3px] text-xs leading-[18px]', monoText)} />
        <button type="button" aria-label="달력" className="flex w-[18px] items-center justify-center border-l border-[#5c5c5c] bg-[#b9b9b9]">
          <svg width="13" height="13" viewBox="0 0 13 13"><path d="M1 2h11v10.500H1Z" fill="#2d2d2d" /><path d="M3.500 0v3M6.500 0v3M9.500 0v3" stroke="#8c8c8c" /><path d="M4 7l2 2.500 3.500-4" fill="none" stroke="#fff" strokeWidth="1.600" /></svg>
        </button>
      </div>
      <button type="button" aria-label="조회" className="flex h-5 w-[22px] items-center justify-center border border-[#5c5c5c] bg-gradient-to-b from-[#f4f4f4] to-[#b4b4b4]">
        <svg width="6" height="10" viewBox="0 0 6 10"><path d="M0 0v10l6-5Z" fill="#3a3a3a" /></svg>
      </button>
      {sources.map(([name, active]) => (
        <button
          key={name}
          type="button"
          className={clsx(
            'relative h-5 w-[95px] whitespace-nowrap border pb-px text-[13px] leading-4',
            active ? 'border-[#1f4f8c] bg-gradient-to-b from-[#5a9fe6] to-[#2565bb] text-white' : 'border-[#5c5c5c] bg-gradient-to-b from-[#d2d2d2] to-[#fafafa] text-[#333]'
          )}
        >
          {name}
          {active && (
            <svg className="absolute top-px right-0" width="9" height="6" viewBox="0 0 9 6" fill="none" stroke="#d9ecff" strokeWidth="2"><path d="M1 1l3 3 4-4" /></svg>
          )}
        </button>
      ))}
    </div>
    <div className="flex flex-1 border border-[#6f8499] bg-white">
      <table className={clsx('flex-1 table-fixed self-start border-collapse text-[13px] whitespace-nowrap', monoText)}>
        <thead>
          <tr className="bg-[#276bb0] leading-4 text-white [font-family:'Noto_Sans_CJK_KR','Liberation_Sans',sans-serif]">
            <th className="w-[50px] border-r border-b border-[#a9bccb] font-normal">시간</th>
            <th className="border-r border-b border-[#a9bccb] font-normal">제목</th>
            <th className="w-[66px] border-b border-[#a9bccb] pr-2 text-right font-normal">뉴스원</th>
          </tr>
        </thead>
        <tbody>
          {news.map(([time, title, source], i) => (
            <tr key={title} className={clsx('border-b border-[#a9bccb] leading-4 last:border-b-0', i === 0 && 'bg-[#cadbe9]')}>
              <td className="border-r border-[#a9bccb] text-center">{time}</td>
              <td className="overflow-hidden border-r border-[#a9bccb]">{title}</td>
              <td>{source}</td>
            </tr>
          ))}
        </tbody>
      </table>
      <div className="flex w-[17px] flex-col gap-px border-l border-[#6f8499] p-px">
        <button type="button" aria-label="위로" className="flex h-[14px] items-center justify-center bg-[#c1cfe1]">
          <svg width="8" height="4" viewBox="0 0 8 4"><path d="M0 4h8L4 0Z" fill="#26456e" /></svg>
        </button>
        <span className="h-2 bg-[#c1cfe1]" />
        <button type="button" aria-label="아래로" className="mt-auto flex h-[14px] items-center justify-center bg-[#c1cfe1]">
          <svg width="8" height="4" viewBox="0 0 8 4"><path d="M0 0h8L4 4Z" fill="#26456e" /></svg>
        </button>
      </div>
    </div>
  </section>
);

const App = () => (
  <div className="border border-[#1e90ff] bg-[#155ca5] [font-family:'Noto_Sans_CJK_KR','Liberation_Sans',sans-serif]">
    <TitleBar />
    <div className="mx-[2px] mb-[2px] bg-[#dedfe3]">
      <TabBar />
      <main className="flex flex-col gap-1 px-1 pt-[3px] pb-1">
        <div className="grid grid-cols-6 gap-1">
          {indices.map((item) => <IndexCard key={item.name} item={item} />)}
        </div>
        <div className="grid grid-cols-2 gap-1">
          {spots.map((item) => <SpotCard key={item.name} item={item} />)}
        </div>
        <div className="grid grid-cols-4 gap-1">
          {commodities.map((item) => <CommodityCard key={item.name} item={item} />)}
          {pairs.map((pair) => <PairPicker key={pair.code} pair={pair} />)}
          {pairs.map((pair) => <PairCard key={pair.code} pair={pair} />)}
          {charts.map((chart) => <Chart key={chart.title} chart={chart} />)}
        </div>
        <div className="grid grid-cols-2 gap-1">
          <CompareChart />
          <NewsPanel />
        </div>
      </main>
    </div>
  </div>
);

export default App;
